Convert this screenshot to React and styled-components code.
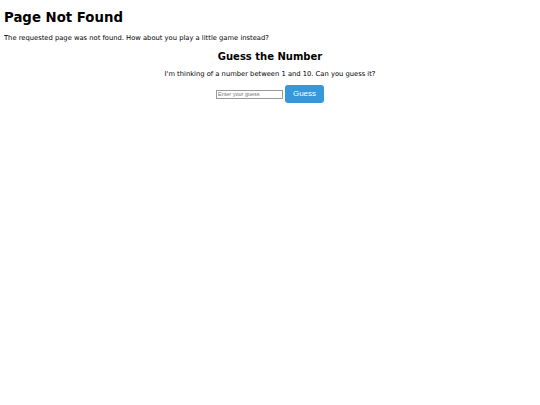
import React, { useState } from 'react';
import styled, { createGlobalStyle } from 'styled-components';

const GlobalStyle = createGlobalStyle`
  body {
    margin: 4px;
    font-family: "DejaVu Sans", Verdana, sans-serif;
    color: #000;
    background: #fff;
  }
`;

const Title = styled.h1`
  font-size: 13.3px;
  margin: 6px 0 9px;
`;

const Text = styled.p`
  font-size: 6.75px;
  margin: 0;
`;

const Game = styled.div`
  text-align: center;
  margin-top: 9.3px;
`;

const GameTitle = styled.h2`
  font-size: 10px;
  margin: 0 0 8.2px;
`;

const Row = styled.div`
  display: flex;
  justify-content: center;
  align-items: center;
  gap: 2px;
  margin-top: 7px;
`;

const Input = styled.input`
  width: 67px;
  height: 9px;
  box-sizing: border-box;
  font-size: 5.5px;
  padding: 0 1px;
  border: 1px solid #999;
  font-family: "Liberation Sans", Arial, sans-serif;

  &::placeholder {
    color: #777;
  }
`;

const Button = styled.button`
  width: 39px;
  height: 18px;
  border: none;
  border-radius: 3px;
  background: #3498db;
  color: #fff;
  font-size: 8px;
  font-family: "Liberation Sans", Arial, sans-serif;
  padding: 0 0 1px;
`;

export default function App() {
  const [guess, setGuess] = useState('');
  return (
    <>
      <GlobalStyle />
      <Title>Page Not Found</Title>
      <Text>The requested page was not found. How about you play a little game instead?</Text>
      <Game>
        <GameTitle>Guess the Number</GameTitle>
        <Text>I'm thinking of a number between 1 and 10. Can you guess it?</Text>
        <Row>
          <Input
            placeholder="Enter your guess"
            value={guess}
            onChange={e => setGuess(e.target.value)}
          />
          <Button>Guess</Button>
        </Row>
      </Game>
    </>
  );
}
